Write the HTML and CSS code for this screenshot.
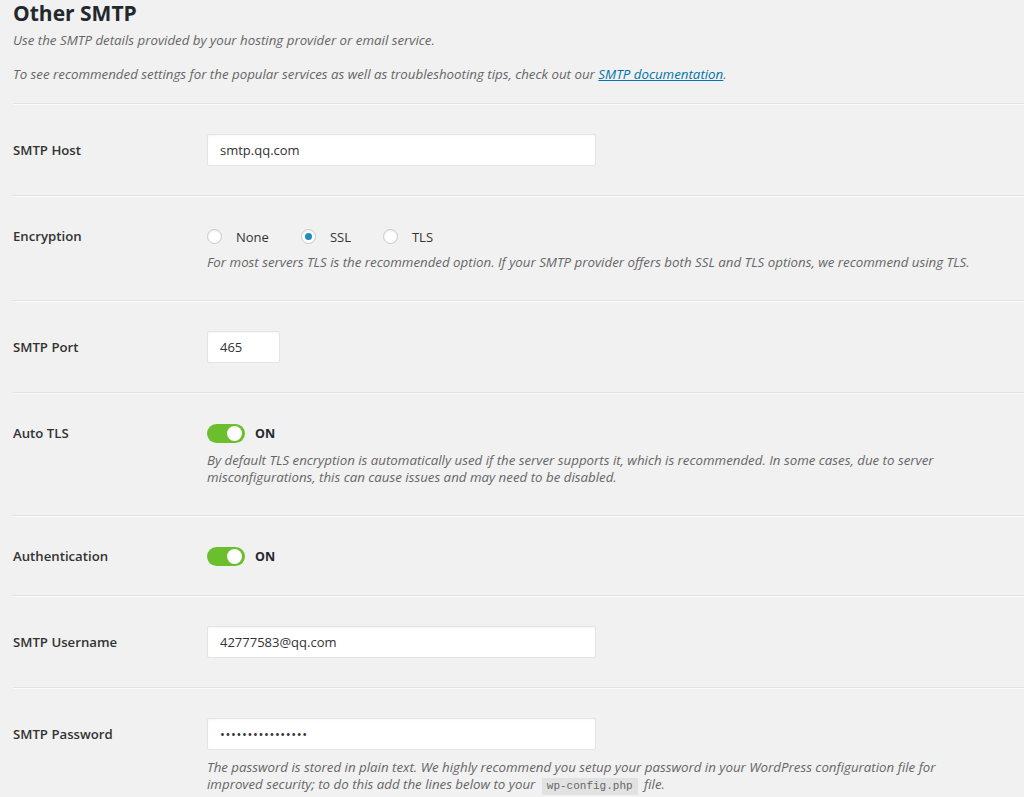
FILE: index.html
```html
<!DOCTYPE html>
<html lang="en">
<head>
  <meta charset="UTF-8">
  <title>Other SMTP</title>
  <link rel="stylesheet" href="styles.css">
</head>
<body>
  <div class="section">
    <div class="intro">
      <h2>Other SMTP</h2>
      <p class="desc">Use the SMTP details provided by your hosting provider or email service.</p>
      <p class="desc">To see recommended settings for the popular services as well as troubleshooting tips, check out our <a href="#">SMTP documentation</a>.</p>
    </div>

    <div class="row">
      <div class="label">SMTP Host</div>
      <div class="field">
        <input class="text" type="text" value="smtp.qq.com">
      </div>
    </div>

    <div class="row">
      <div class="label short">Encryption</div>
      <div class="field">
        <div class="radios">
          <label><span class="radio"></span>None</label>
          <label><span class="radio checked"></span>SSL</label>
          <label><span class="radio"></span>TLS</label>
        </div>
        <p class="desc">For most servers TLS is the recommended option. If your SMTP provider offers both SSL and TLS options, we recommend using TLS.</p>
      </div>
    </div>

    <div class="row">
      <div class="label">SMTP Port</div>
      <div class="field">
        <input class="text small" type="text" value="465">
      </div>
    </div>

    <div class="row">
      <div class="label short">Auto TLS</div>
      <div class="field">
        <div class="toggle"><span class="switch"></span><span class="on">ON</span></div>
        <p class="desc">By default TLS encryption is automatically used if the server supports it, which is recommended. In some cases, due to server misconfigurations, this can cause issues and may need to be disabled.</p>
      </div>
    </div>

    <div class="row">
      <div class="label short">Authentication</div>
      <div class="field">
        <div class="toggle last"><span class="switch"></span><span class="on">ON</span></div>
      </div>
    </div>

    <div class="row">
      <div class="label">SMTP Username</div>
      <div class="field">
        <input class="text" type="text" value="42777583@qq.com">
      </div>
    </div>

    <div class="row">
      <div class="label">SMTP Password</div>
      <div class="field">
        <input class="text" type="password" value="abcdefghijklmnop">
        <p class="desc">The password is stored in plain text. We highly recommend you setup your password in your WordPress configuration file for improved security; to do this add the lines below to your <code>wp-config.php</code> file.</p>
      </div>
    </div>
  </div>
</body>
</html>
```

FILE: styles.css
```css
body {
  margin: 0;
  background: #f1f1f1;
  font-family: 'Open Sans', sans-serif;
  font-size: 13px;
  color: #444;
  overflow: hidden;
}
.section {
  padding-left: 13px;
}
.intro {
  padding-bottom: 20px;
  border-bottom: 1px solid #e2e2e2;
  box-shadow: 0 1px 0 #fafafa;
}
h2 {
  margin: 0 0 6px;
  font-size: 21px;
  font-weight: 700;
  color: #23282d;
  line-height: 26px;
}
.desc {
  margin: 0;
  font-style: italic;
  font-size: 13.3px;
  line-height: 17px;
  color: #666;
}
.intro .desc + .desc {
  margin-top: 17px;
}
a {
  color: #0073aa;
}
.row {
  display: flex;
  padding: 30px 0 29px;
  border-bottom: 1px solid #e2e2e2;
  box-shadow: 0 1px 0 #fafafa;
}
.label {
  width: 194px;
  flex-shrink: 0;
  font-weight: 600;
  font-size: 13.2px;
  color: #333;
  line-height: 32px;
}
.label.short {
  line-height: 20px;
}
.field {
  max-width: 775px;
}
.text {
  display: block;
  box-sizing: border-box;
  width: 389px;
  height: 32px;
  margin: 0;
  padding: 0 12px;
  border: 1px solid #e4e4e4;
  border-radius: 2px;
  background: #fff;
  font-family: inherit;
  font-size: 13px;
  color: #333;
  box-shadow: inset 0 1px 2px rgba(0, 0, 0, 0.04);
}
input[type="password"] {
  letter-spacing: 0.6px;
}
.text.small {
  width: 73px;
}
.field .text + .desc {
  margin-top: 9px;
}
.radios {
  display: flex;
  gap: 32px;
  height: 21px;
  align-items: center;
  margin-bottom: 7px;
}
.radios label {
  display: flex;
  align-items: center;
  font-size: 13px;
  color: #333;
}
.radio {
  display: inline-block;
  position: relative;
  box-sizing: border-box;
  width: 15px;
  height: 15px;
  margin-right: 14px;
  border: 1px solid #c6c9cc;
  border-radius: 50%;
  background: #fff;
  box-shadow: inset 0 1px 2px rgba(0, 0, 0, 0.08);
}
.radio.checked::after {
  content: "";
  position: absolute;
  left: 3px;
  top: 3px;
  width: 7px;
  height: 7px;
  border-radius: 50%;
  background: #1e8cbe;
}
.toggle {
  display: flex;
  align-items: center;
  height: 20px;
  margin-bottom: 9px;
}
.toggle.last {
  margin-bottom: 0;
}
.switch {
  position: relative;
  width: 38px;
  height: 19px;
  border-radius: 10px;
  background: #6bbf2c;
  margin-right: 10px;
}
.switch::after {
  content: "";
  position: absolute;
  right: 3px;
  top: 2px;
  width: 15px;
  height: 15px;
  border-radius: 50%;
  background: #fff;
}
.on {
  font-weight: 700;
  font-size: 12.5px;
  color: #23282d;
}
code {
  display: inline-block;
  font-family: 'Liberation Mono', monospace;
  font-style: normal;
  font-size: 11px;
  line-height: 17px;
  background: #e2e2e2;
  padding: 0 5px;
  margin: 0 3px;
}
```
